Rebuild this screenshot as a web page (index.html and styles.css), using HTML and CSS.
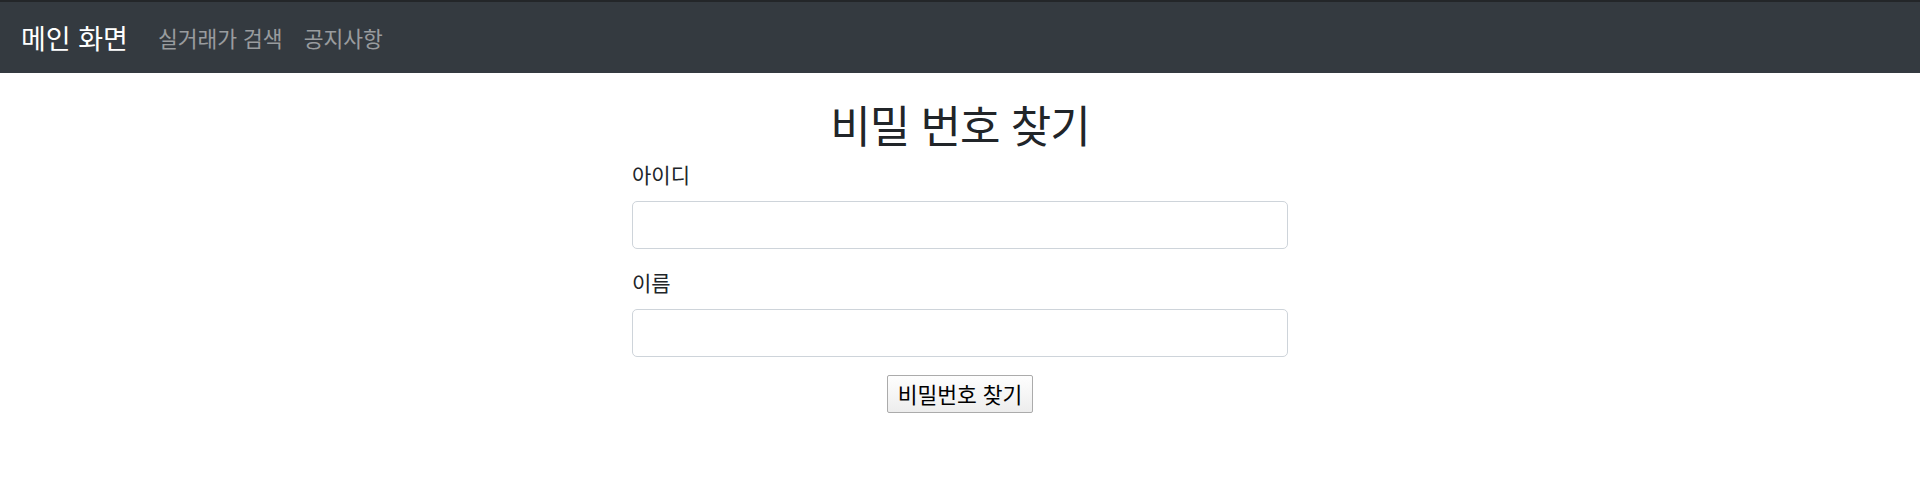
FILE: index.html
```html
<!DOCTYPE html>
<html lang="ko">
<head>
<meta charset="utf-8">
<title>비밀 번호 찾기</title>
<link rel="stylesheet" href="styles.css">
</head>
<body>
<nav class="navbar">
  <a class="brand" href="#">메인 화면</a>
  <ul class="nav">
    <li><a class="nav-link" href="#">실거래가 검색</a></li>
    <li><a class="nav-link" href="#">공지사항</a></li>
  </ul>
</nav>
<main class="container">
  <h1 class="title">비밀 번호 찾기</h1>
  <form class="form">
    <div class="group">
      <label class="label" for="uid">아이디</label>
      <input class="control" type="text" id="uid">
    </div>
    <div class="group">
      <label class="label" for="uname">이름</label>
      <input class="control" type="text" id="uname">
    </div>
    <div class="actions">
      <button class="btn" type="button">비밀번호 찾기</button>
    </div>
  </form>
</main>
</body>
</html>
```

FILE: styles.css
```css
* { box-sizing: border-box; }

body {
  margin: 0;
  background: #fff;
  color: #212529;
  font-family: "Noto Sans CJK KR", "Noto Sans", sans-serif;
}

.navbar {
  display: flex;
  align-items: center;
  height: 73px;
  border-top: 2px solid #232629;
  background: #343a40;
  padding: 0 0 0 21px;
}

.brand {
  color: #fff;
  text-decoration: none;
  font-size: 27px;
  line-height: 30px;
  margin-right: 30px;
}

.nav {
  display: flex;
  list-style: none;
  margin: 0;
  padding: 0;
  gap: 21px;
}

.nav-link {
  color: rgba(255, 255, 255, 0.5);
  text-decoration: none;
  font-size: 21.5px;
  line-height: 30px;
}

.container {
  width: 656px;
  margin: 0 auto;
  padding-top: 26px;
}

.title {
  margin: 0 0 10px;
  text-align: center;
  font-weight: 400;
  font-size: 44px;
  line-height: 50px;
  letter-spacing: -1px;
  color: #212529;
}

.group {
  display: flex;
  flex-direction: column;
  margin-bottom: 18px;
}

.label {
  font-size: 21px;
  line-height: 30px;
  margin-bottom: 12px;
  color: #212529;
}

.control {
  height: 48px;
  width: 100%;
  border: 1px solid #ced4da;
  border-radius: 5px;
  background: #fff;
  font: inherit;
  padding: 0 16px;
}

.actions {
  display: flex;
  justify-content: center;
  margin-top: 2px;
}

.btn {
  height: 38px;
  width: 146px;
  padding: 0;
  border: 1px solid #ababab;
  border-radius: 2px;
  background: linear-gradient(#fefefe, #ededed);
  font-family: "Noto Sans CJK KR", sans-serif;
  font-size: 21.5px;
  line-height: 36px;
  color: #000;
}
```
